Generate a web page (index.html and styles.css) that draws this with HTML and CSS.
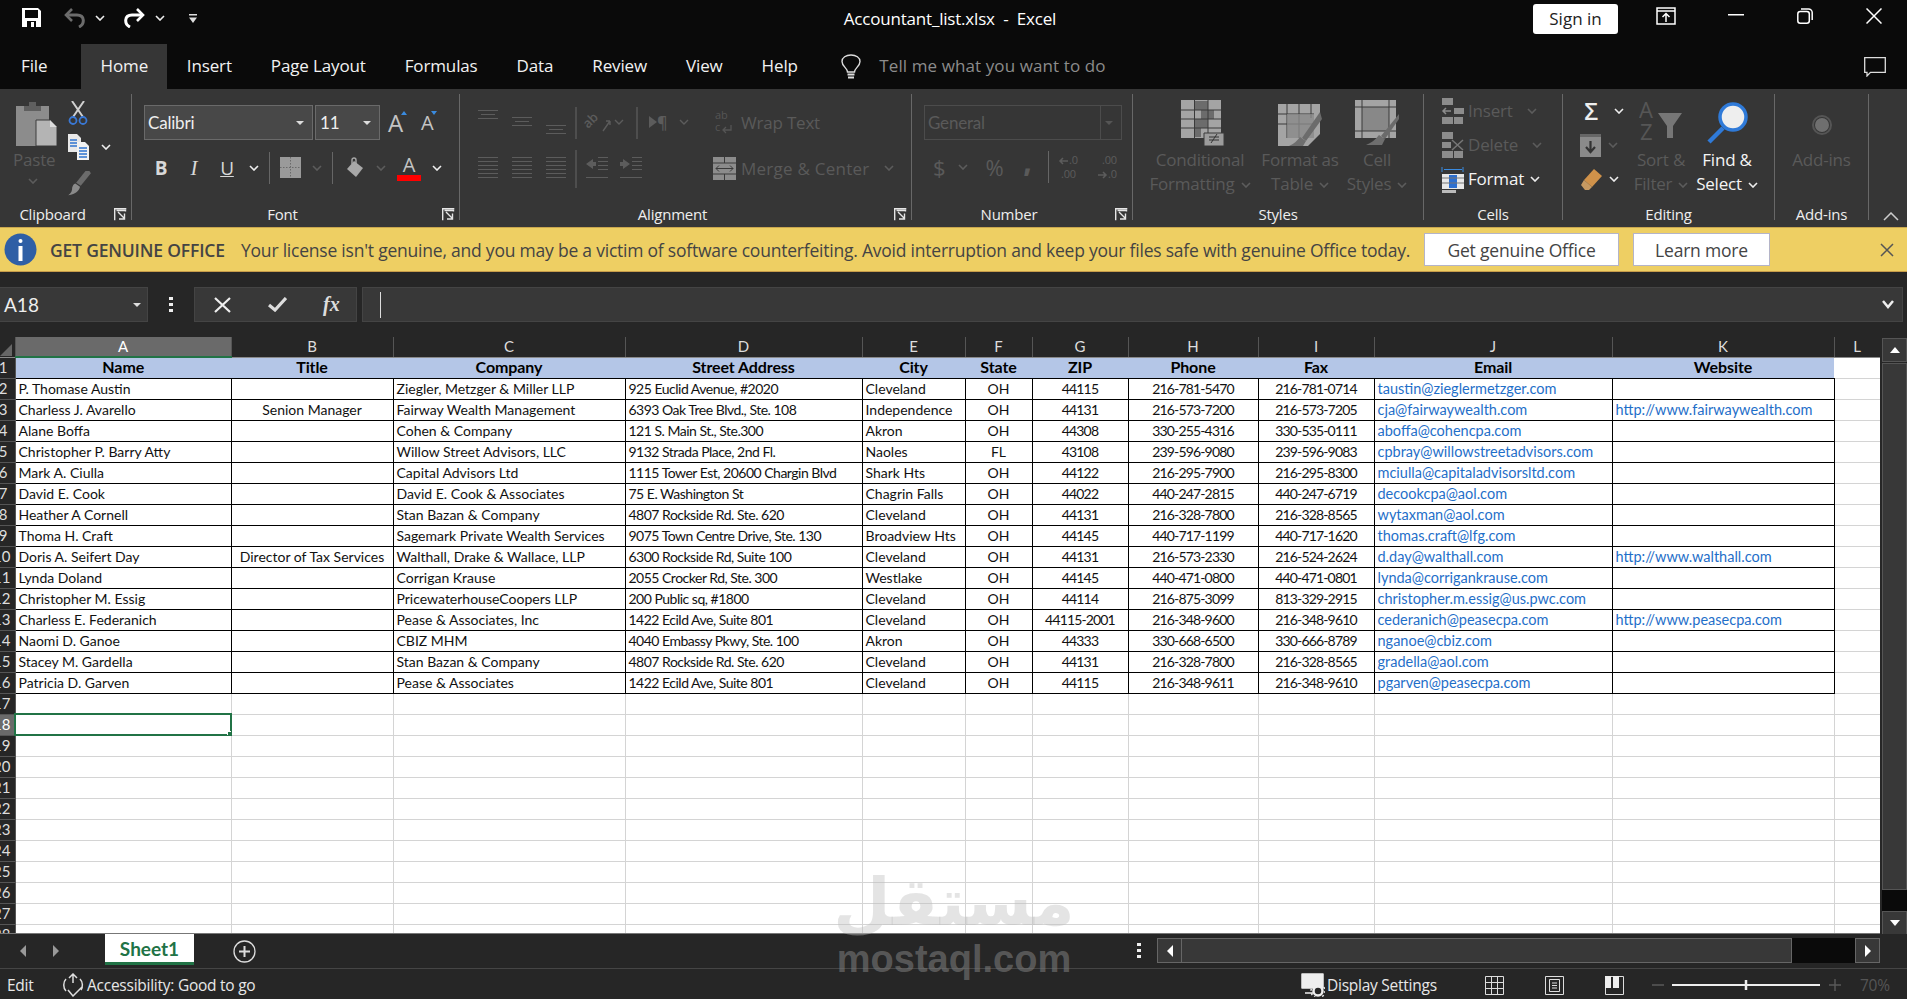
FILE: index.html
```html
<!DOCTYPE html>
<html lang="en">
<head>
<meta charset="utf-8">
<title>Accountant_list.xlsx - Excel</title>
<link rel="stylesheet" href="styles.css">
</head>
<body>
<svg class="defs" width="0" height="0" aria-hidden="true">
  <symbol id="caret" viewBox="0 0 10 6"><path d="M1 1l4 4 4-4" fill="none" stroke="currentColor" stroke-width="1.6"/></symbol>
  <symbol id="launch" viewBox="0 0 13 13"><path d="M.7 12.3V.7h11.6M2.5 2.5h9v1M4 4l6.5 6.5M10.5 5.5v5.5H5" fill="none" stroke="currentColor" stroke-width="1.4"/></symbol>
  <symbol id="brush" viewBox="0 0 30 32"><path d="M22 0h5l2 3-13 16-6-4z" fill="#6b6b6b"/><path d="M9 16l6 4c-1 5-5 9-15 11 4-3 5-6 5-10 1-3 2-4 4-5z" fill="#8a8a8a"/></symbol>
</svg>
<div class="app">
  <header class="titlebar">
    <div class="qat">
      <svg class="q-save" width="20" height="20" viewBox="0 0 20 20"><path fill="#fff" d="M0 0h16l3 3v16H0z"/><path fill="#0a0a0a" d="M3 2h13v8H3zM5 13h9v6H5z"/><path fill="#fff" d="M9 14h3v5H9z"/></svg>
      <svg class="q-undo" width="24" height="20" viewBox="0 0 24 20"><path d="M16 19c6-3 6-12-2-12H4" fill="none" stroke="#6c6c6c" stroke-width="3"/><path d="M9 1L3 7l6 6" fill="none" stroke="#6c6c6c" stroke-width="2.6"/></svg>
      <svg class="car q-c1"><use href="#caret"/></svg>
      <svg class="q-redo" width="24" height="20" viewBox="0 0 24 20"><path d="M8 19C2 16 2 7 10 7h10" fill="none" stroke="#fff" stroke-width="3"/><path d="M15 1l6 6-6 6" fill="none" stroke="#fff" stroke-width="2.6"/></svg>
      <svg class="car q-c2"><use href="#caret"/></svg>
      <svg class="q-cust" width="8" height="9" viewBox="0 0 8 9"><path d="M0 0h8v1.5H0zM0 3.5h8L4 9z" fill="#ddd"/></svg>
    </div>
    <div class="doc-title">Accountant_list.xlsx&nbsp; -&nbsp; Excel</div>
    <div class="win">
      <button class="signin">Sign in</button>
      <svg class="w-rib" width="20" height="18" viewBox="0 0 20 18"><path d="M1 1h18v16H1zM1 4h18" fill="none" stroke="#fff" stroke-width="1.5"/><path d="M10 15V7M6.5 10L10 6.5l3.500 3.500" fill="none" stroke="#fff" stroke-width="1.500"/></svg>
      <svg class="w-min" width="16" height="2" viewBox="0 0 16 2"><path d="M0 0h16v1.500H0z" fill="#fff"/></svg>
      <svg class="w-max" width="16" height="16" viewBox="0 0 16 16"><rect x=".8" y="3.500" width="11.500" height="11.700" rx="2.500" fill="none" stroke="#fff" stroke-width="1.500"/><path d="M4 1h7.500c2 0 3.700 1.500 3.700 3.500V12" fill="none" stroke="#fff" stroke-width="1.500"/></svg>
      <svg class="w-x" width="16" height="16" viewBox="0 0 16 16"><path d="M.5.5l15 15M15.500.5l-15 15" stroke="#fff" stroke-width="1.500"/></svg>
    </div>
  </header>

  <nav class="tabs">
    <span class="tab t-file">File</span>
    <span class="tab active">Home</span>
    <span class="tab">Insert</span>
    <span class="tab">Page Layout</span>
    <span class="tab">Formulas</span>
    <span class="tab">Data</span>
    <span class="tab">Review</span>
    <span class="tab">View</span>
    <span class="tab">Help</span>
    <svg class="bulb" width="20" height="25" viewBox="0 0 20 25"><path d="M6.500 18c0-4-5.500-5.500-5.500-10.500C1 3.500 5 1 10 1s9 2.500 9 6.500C19 12.500 13.500 14 13.500 18z" fill="none" stroke="#ddd" stroke-width="1.400"/><path d="M6.500 20.500h7M7 23.500h6" stroke="#ddd" stroke-width="1.800"/></svg>
    <span class="tellme">Tell me what you want to do</span>
    <svg class="comment" width="22" height="20" viewBox="0 0 22 20"><path d="M.7.7h20.600v14.600H6.500L3 19v-3.700H.7z" fill="none" stroke="#ddd" stroke-width="1.300"/></svg>
  </nav>

  <section class="ribbon">
    <div class="group g-clip">
      <div class="body">
        <div class="lg paste">
          <svg class="ico" width="41" height="46" viewBox="0 0 41 46"><path d="M0 6h33v40H0z" fill="#8c8c8c"/><path d="M8 6h17v5H8zM13 2h7v4h-7z" fill="#5f5f5f"/><path d="M20 20h14l7 7v19H20z" fill="#b4b4b4" stroke="#3c3c3c"/><path d="M34 20v7h7z" fill="#dcdcdc"/></svg>
          <span class="dim">Paste</span>
          <svg class="car dimc"><use href="#caret"/></svg>
        </div>
        <div class="mini">
          <svg class="m-cut" width="20" height="24" viewBox="0 0 20 24"><path d="M4 0l11 16M16 0L5 16" stroke="#d0d0d0" stroke-width="2"/><circle cx="5" cy="19.500" r="3.500" fill="none" stroke="#3a78d4" stroke-width="1.800"/><circle cx="15" cy="19.500" r="3.500" fill="none" stroke="#3a78d4" stroke-width="1.800"/></svg>
          <div class="m-copy"><svg width="21" height="26" viewBox="0 0 21 26"><path d="M0 0h9l4 4v14H0z" fill="#e8e8e8"/><path d="M2 6h7M2 9h9M2 12h9" stroke="#2f74d0" stroke-width="1.300"/><path d="M9 8h8l4 4v14H9z" fill="#f2f2f2"/><path d="M11 14h8M11 17h8M11 20h8M11 23h8" stroke="#2f74d0" stroke-width="1.300"/></svg><svg class="car"><use href="#caret"/></svg></div>
          <svg class="m-brush" width="24" height="25"><use href="#brush"/></svg>
        </div>
      </div>
      <div class="label"><span class="l-clip">Clipboard</span><svg class="launch"><use href="#launch"/></svg></div>
    </div>

    <div class="group g-font">
      <div class="body col">
        <div class="f-row1">
          <div class="combo c-name"><span>Calibri</span><i class="tri"></i></div>
          <div class="combo c-size"><span>11</span><i class="tri"></i></div>
          <span class="bigA grow">A<i class="up"></i></span>
          <span class="bigA shrink">A<i class="dn"></i></span>
        </div>
        <div class="f-row2">
          <span class="fx b">B</span>
          <span class="fx i">I</span>
          <span class="fx u">U</span>
          <svg class="car"><use href="#caret"/></svg>
          <i class="vsep"></i>
          <svg width="21" height="21" viewBox="0 0 21 21"><path d="M0 0h21v21H0z" fill="#9a9a9a"/><path d="M10.500 0v21M0 10.500h21" stroke="#6a6a6a" stroke-dasharray="1.500 1.500"/></svg>
          <svg class="car dimc"><use href="#caret"/></svg>
          <i class="vsep"></i>
          <svg width="20" height="21" viewBox="0 0 20 21"><path d="M9 4l9 7-7 9-9-8z" fill="#a8a8a8"/><path d="M7 7V3a2 2 0 0 1 4 0v4" fill="none" stroke="#a8a8a8" stroke-width="1.400"/></svg>
          <svg class="car dimc"><use href="#caret"/></svg>
          <span class="fcolor">A</span>
          <svg class="car"><use href="#caret"/></svg>
        </div>
      </div>
      <div class="label"><span>Font</span><svg class="launch"><use href="#launch"/></svg></div>
    </div>

    <div class="group g-align">
      <div class="body">
        <div class="a-left">
          <svg width="242" height="36" viewBox="0 0 242 36"><g stroke="#5c5c5c"><path d="M18 7.500h20M21 11.500h14M18 15.500h20M52 14.500h20M55 18.500h14M52 22.500h20M86 22.500h20M89 26.500h14M86 30.500h20"/><path d="M116 4v32M177 4v32" stroke="#666"/></g><g fill="#5c5c5c" font-family="Open Sans" font-size="13" font-weight="600"><text transform="translate(128 26) rotate(-45)">ab</text><path d="M189 13v12l8-6z"/><text x="197" y="25" font-size="16">¶</text></g><g fill="none" stroke="#5c5c5c" stroke-width="1.400"><path d="M155 17l4 4 4-4M220 17l4 4 4-4"/><path d="M143 28l7-10M150 18h-4M150 18v4"/></g></svg>
          <svg class="a-s2" width="242" height="38" viewBox="0 0 242 38"><g stroke="#5c5c5c"><path d="M18 7.500h20M18 11.500h20M18 15.500h20M18 19.500h20M18 23.500h20M18 27.500h20M52 7.500h20M52 11.500h20M52 15.500h20M52 19.500h20M52 23.500h20M52 27.500h20M86 7.500h20M86 11.500h20M86 15.500h20M86 19.500h20M86 23.500h20M86 27.500h20"/><path d="M116 0v38" stroke="#666"/><path d="M138 7.500h10M138 11.500h10M138 15.500h10M138 19.500h10M126 27.500h22M172 7.500h10M172 11.500h10M172 15.500h10M172 19.500h10M160 27.500h22"/></g><path d="M126 14l7-5v3h3v4h-3v3zM170 14l-7-5v3h-3v4h3v3z" fill="#5c5c5c"/></svg>
        </div>
        <div class="a-right">
          <div class="a-line"><svg class="a-w" width="19" height="30" viewBox="0 0 19 30"><g fill="#555" font-family="Open Sans" font-size="11"><text x="0" y="12">ab</text><text x="0" y="24">c</text></g><path d="M16 18v5H9M11 20l-3 3 3 3" fill="none" stroke="#555" stroke-width="1.300"/></svg><span class="dim">Wrap Text</span></div>
          <div class="a-line a-m"><svg class="a-mi" width="23" height="23" viewBox="0 0 23 23"><path d="M0 0h23v23H0z" fill="#8c8c8c"/><path d="M0 6h23M0 17h23M11.500 0v6M11.500 17v6" stroke="#3a3a3a"/><path d="M3 11.500h17M6 8.500l-3 3 3 3M17 8.500l3 3-3 3" fill="none" stroke="#3a3a3a"/></svg><span class="dim">Merge &amp; Center</span><svg class="car dimc"><use href="#caret"/></svg></div>
        </div>
      </div>
      <div class="label"><span>Alignment</span><svg class="launch dimc"><use href="#launch"/></svg></div>
    </div>

    <div class="group g-num">
      <div class="body col">
        <div class="combo c-gen"><span class="dim">General</span><i class="tri dimt"></i></div>
        <div class="n-row">
          <span class="dim n-d">$</span><svg class="car dimc"><use href="#caret"/></svg>
          <span class="dim n-p">%</span>
          <span class="dim n-c">,</span>
          <i class="vsep"></i>
          <svg width="60" height="28" viewBox="0 0 60 28"><g fill="#5c5c5c" font-family="Open Sans" font-size="11"><text x="11" y="11">.0</text><text x="3" y="25">.00</text><text x="44" y="11">.00</text><text x="50" y="25">.0</text></g><path d="M10 8H2M5 5L2 8l3 3M40 22h8M45 19l3 3-3 3" fill="none" stroke="#5c5c5c" stroke-width="1.500"/></svg>
        </div>
      </div>
      <div class="label"><span>Number</span><svg class="launch dimc"><use href="#launch"/></svg></div>
    </div>

    <div class="group g-styles">
      <div class="body">
        <div class="lg s1">
          <svg class="ico" width="44" height="46" viewBox="0 0 44 46"><path d="M0 0h40v38H0z" fill="#a4a4a4"/><path d="M14 1h13v9H14zM14 19h13v9H14zM20 10h13v9H20zM14 28h6v9h-6z" fill="#6c6c6c"/><path d="M0 10h40M0 19h40M0 28h40M13.500 0v38M27 0v38" stroke="#3a3a3a"/><path d="M23 33h20v13H23z" fill="#9c9c9c" stroke="#3a3a3a"/><path d="M28 40h10M28 43h10M30 46l6-9" stroke="#333" transform="translate(0 -3)"/></svg>
          <span class="dim">Conditional</span>
          <span class="dim">Formatting<svg class="car dimc"><use href="#caret"/></svg></span>
        </div>
        <div class="lg s2">
          <svg class="ico" width="44" height="46" viewBox="0 0 44 46"><path d="M0 4h42v30L30 46H0z" fill="#a4a4a4"/><path d="M0 14h36M0 24h36M9 4v34M21 4v34M33 4v14" stroke="#3a3a3a"/><path d="M9 14h27v24H9z" fill="#8a8a8a" opacity=".8"/><path d="M42 12L24 38l4 3 16-22z" fill="#6b6b6b"/><path d="M22 37l6 4-3 5H11c5-2 8-5 11-9z" fill="#6e6e6e"/></svg>
          <span class="dim">Format as</span>
          <span class="dim">Table<svg class="car dimc"><use href="#caret"/></svg></span>
        </div>
        <div class="lg s3">
          <svg class="ico" width="44" height="46" viewBox="0 0 44 46"><path d="M0 0h41v38H0z" fill="#a4a4a4"/><path d="M7 7h27v24H7z" fill="#888"/><path d="M0 7h41M0 31h41M7 0v38M34 0v38" stroke="#3a3a3a"/><path d="M44 14L26 36l4 3 14-20z" fill="#6b6b6b"/><path d="M24 35l6 4-3 6H11c5-2 9-5 13-10z" fill="#6e6e6e"/></svg>
          <span class="dim">Cell</span>
          <span class="dim">Styles<svg class="car dimc"><use href="#caret"/></svg></span>
        </div>
      </div>
      <div class="label"><span>Styles</span></div>
    </div>

    <div class="group g-cells">
      <div class="body col">
        <div class="c-row"><svg width="23" height="26" viewBox="0 0 23 26"><path d="M1 0h11v7H1zM1 19h11v7H1zM13 19h9v7h-9zM13 10h10v6H13zM1 0h11v7H1z" fill="#8c8c8c"/><path d="M2 13h8M5 10l-3 3 3 3" stroke="#8c8c8c" fill="none" stroke-width="1.500"/></svg><span class="dim">Insert</span><svg class="car dimc c-i"><use href="#caret"/></svg></div>
        <div class="c-row"><svg width="23" height="26" viewBox="0 0 23 26"><path d="M1 0h11v7H1zM1 19h11v7H1zM13 19h9v7h-9zM1 10h9v6H1z" fill="#8c8c8c"/><path d="M11 8l11 10M22 8L11 18" stroke="#777" stroke-width="1.500"/></svg><span class="dim">Delete</span><svg class="car dimc c-d"><use href="#caret"/></svg></div>
        <div class="c-row"><svg width="23" height="27" viewBox="0 0 23 27"><path d="M1 1v5M22 1v5M3 3.500h18" stroke="#3a8be0" fill="none"/><path d="M1 8h22v15H1z" fill="#e8e8e8"/><path d="M8 9h8v13H8z" fill="#2d6fd0"/><path d="M1 24h14v3H1z" fill="#bbb"/><path d="M1 12h22M1 17h22" stroke="#777"/></svg><span class="wht">Format</span><svg class="car c-f"><use href="#caret"/></svg></div>
      </div>
      <div class="label"><span>Cells</span></div>
    </div>

    <div class="group g-edit">
      <div class="body">
        <div class="mini2">
          <div class="e-row"><span class="sigma">Σ</span><svg class="car e-c1"><use href="#caret"/></svg></div>
          <div class="e-row"><svg width="21" height="23" viewBox="0 0 21 23"><path d="M0 0h21v23H0z" fill="#8a8a8a"/><path d="M0 0h21v3H0z" fill="#666"/><path d="M10.500 7v11M6 13l4.500 5 4.500-5" fill="none" stroke="#333" stroke-width="2.200"/></svg><svg class="car dimc e-c2"><use href="#caret"/></svg></div>
          <div class="e-row"><svg width="22" height="21" viewBox="0 0 22 21"><path d="M14 0l8 7-10 11-8-7z" fill="#d0924a"/><path d="M4 11l8 7-3 3H5L1 16z" fill="#c79a62"/></svg><svg class="car e-c3"><use href="#caret"/></svg></div>
        </div>
        <div class="lg sort">
          <svg class="ico" width="44" height="46" viewBox="0 0 44 46"><g fill="#565656" font-family="Open Sans" font-size="22"><text x="0" y="18">A</text><text x="1" y="40">Z</text></g><path d="M19 13h24L34 26v12h-6V26z" fill="#767676"/></svg>
          <span class="dim">Sort &amp;</span>
          <span class="dim">Filter<svg class="car dimc"><use href="#caret"/></svg></span>
        </div>
        <div class="lg find">
          <svg class="ico" width="42" height="46" viewBox="0 0 42 46"><circle cx="27" cy="17" r="13" fill="#eee" stroke="#2f7ad8" stroke-width="3.500"/><path d="M17 28L3 42" stroke="#2f7ad8" stroke-width="4.500"/></svg>
          <span class="wht">Find &amp;</span>
          <span class="wht">Select<svg class="car"><use href="#caret"/></svg></span>
        </div>
      </div>
      <div class="label"><span>Editing</span></div>
    </div>

    <div class="group g-add">
      <div class="body">
        <div class="lg add">
          <svg class="ico" width="46" height="46" viewBox="0 0 46 46"><circle cx="23" cy="25" r="7" fill="#6f6f6f"/><circle cx="23" cy="25" r="9" fill="none" stroke="#555" stroke-width="2"/></svg>
          <span class="dim">Add-ins</span>
        </div>
      </div>
      <div class="label"><span>Add-ins</span></div>
    </div>
    <svg class="collapse" width="16" height="9" viewBox="0 0 16 9"><path d="M1 8l7-7 7 7" fill="none" stroke="#ccc" stroke-width="1.500"/></svg>
  </section>

  <section class="notice">
    <svg class="n-info" width="33" height="33" viewBox="0 0 33 33"><circle cx="16.500" cy="16.500" r="16" fill="#2f5fa5"/><rect x="14.500" y="13" width="4" height="15" fill="#fff"/><rect x="14.500" y="6" width="4" height="4" rx="2" fill="#fff"/></svg>
    <strong class="n-title">GET GENUINE OFFICE</strong>
    <span class="n-msg">Your license isn't genuine, and you may be a victim of software counterfeiting. Avoid interruption and keep your files safe with genuine Office today.</span>
    <button class="n-btn n-get">Get genuine Office</button>
    <button class="n-btn n-learn">Learn more</button>
    <svg class="n-x" width="14" height="14" viewBox="0 0 14 14"><path d="M1 1l12 12M13 1L1 13" stroke="#555" stroke-width="1.500"/></svg>
  </section>

  <section class="fbar">
    <div class="namebox"><span>A18</span><i class="tri"></i></div>
    <svg class="f-dots" width="4" height="15" viewBox="0 0 4 15"><path d="M0 0h4v3H0zM0 6h4v3H0zM0 12h4v3H0z" fill="#eee"/></svg>
    <div class="fbtns">
      <svg width="17" height="16" viewBox="0 0 17 16"><path d="M1 1l15 14M16 1L1 15" stroke="#eee" stroke-width="2.200"/></svg>
      <svg width="19" height="15" viewBox="0 0 19 15"><path d="M1 8l6 5L18 1" fill="none" stroke="#ddd" stroke-width="3.200"/></svg>
      <span class="fxlbl">fx</span>
    </div>
    <div class="finput"><i class="cursor"></i><svg class="f-exp" width="12" height="9" viewBox="0 0 12 9"><path d="M1 1l5 6 5-6" fill="none" stroke="#eee" stroke-width="2.500"/></svg></div>
  </section>

  <section class="sheetwrap">
    <div class="sheet">
      <table>
        <colgroup><col class="w-rh"><col class="w-a"><col class="w-b"><col class="w-c"><col class="w-d"><col class="w-e"><col class="w-f"><col class="w-g"><col class="w-h"><col class="w-i"><col class="w-j"><col class="w-k"><col class="w-l"></colgroup>
        <thead>
          <tr class="ch"><th class="corner"><i></i></th><th class="on">A</th><th>B</th><th>C</th><th>D</th><th>E</th><th>F</th><th>G</th><th>H</th><th>I</th><th>J</th><th>K</th><th>L</th></tr>
        </thead>
        <tbody>
          <tr class="hd"><th>1</th><td>Name</td><td>Title</td><td>Company</td><td>Street Address</td><td>City</td><td>State</td><td>ZIP</td><td>Phone</td><td>Fax</td><td>Email</td><td>Website</td><td class="e"></td></tr>
          <tr class="dt"><th>2</th><td>P. Thomase Austin</td><td></td><td>Ziegler, Metzger &amp; Miller LLP</td><td>925 Euclid Avenue, #2020</td><td>Cleveland</td><td class="c">OH</td><td class="c">44115</td><td class="c">216-781-5470</td><td class="c">216-781-0714</td><td class="k">taustin@zieglermetzger.com</td><td></td><td class="e"></td></tr>
          <tr class="dt"><th>3</th><td>Charless J. Avarello</td><td class="c">Senion Manager</td><td>Fairway Wealth Management</td><td>6393 Oak Tree Blvd., Ste. 108</td><td>Independence</td><td class="c">OH</td><td class="c">44131</td><td class="c">216-573-7200</td><td class="c">216-573-7205</td><td class="k">cja@fairwaywealth.com</td><td class="k">http://www.fairwaywealth.com</td><td class="e"></td></tr>
          <tr class="dt"><th>4</th><td>Alane Boffa</td><td></td><td>Cohen &amp; Company</td><td>121 S. Main St., Ste.300</td><td>Akron</td><td class="c">OH</td><td class="c">44308</td><td class="c">330-255-4316</td><td class="c">330-535-0111</td><td class="k">aboffa@cohencpa.com</td><td></td><td class="e"></td></tr>
          <tr class="dt"><th>5</th><td>Christopher P. Barry Atty</td><td></td><td>Willow Street Advisors, LLC</td><td>9132 Strada Place, 2nd Fl.</td><td>Naoles</td><td class="c">FL</td><td class="c">43108</td><td class="c">239-596-9080</td><td class="c">239-596-9083</td><td class="k">cpbray@willowstreetadvisors.com</td><td></td><td class="e"></td></tr>
          <tr class="dt"><th>6</th><td>Mark A. Ciulla</td><td></td><td>Capital Advisors Ltd</td><td>1115 Tower Est, 20600 Chargin Blvd</td><td>Shark Hts</td><td class="c">OH</td><td class="c">44122</td><td class="c">216-295-7900</td><td class="c">216-295-8300</td><td class="k">mciulla@capitaladvisorsltd.com</td><td></td><td class="e"></td></tr>
          <tr class="dt"><th>7</th><td>David E. Cook</td><td></td><td>David E. Cook &amp; Associates</td><td>75 E. Washington St</td><td>Chagrin Falls</td><td class="c">OH</td><td class="c">44022</td><td class="c">440-247-2815</td><td class="c">440-247-6719</td><td class="k">decookcpa@aol.com</td><td></td><td class="e"></td></tr>
          <tr class="dt"><th>8</th><td>Heather A Cornell</td><td></td><td>Stan Bazan &amp; Company</td><td>4807 Rockside Rd. Ste. 620</td><td>Cleveland</td><td class="c">OH</td><td class="c">44131</td><td class="c">216-328-7800</td><td class="c">216-328-8565</td><td class="k">wytaxman@aol.com</td><td></td><td class="e"></td></tr>
          <tr class="dt"><th>9</th><td>Thoma H. Craft</td><td></td><td>Sagemark Private Wealth Services</td><td>9075 Town Centre Drive, Ste. 130</td><td>Broadview Hts</td><td class="c">OH</td><td class="c">44145</td><td class="c">440-717-1199</td><td class="c">440-717-1620</td><td class="k">thomas.craft@lfg.com</td><td></td><td class="e"></td></tr>
          <tr class="dt"><th>10</th><td>Doris A. Seifert Day</td><td class="c">Director of Tax Services</td><td>Walthall, Drake &amp; Wallace, LLP</td><td>6300 Rockside Rd, Suite 100</td><td>Cleveland</td><td class="c">OH</td><td class="c">44131</td><td class="c">216-573-2330</td><td class="c">216-524-2624</td><td class="k">d.day@walthall.com</td><td class="k">http://www.walthall.com</td><td class="e"></td></tr>
          <tr class="dt"><th>11</th><td>Lynda Doland</td><td></td><td>Corrigan Krause</td><td>2055 Crocker Rd, Ste. 300</td><td>Westlake</td><td class="c">OH</td><td class="c">44145</td><td class="c">440-471-0800</td><td class="c">440-471-0801</td><td class="k">lynda@corrigankrause.com</td><td></td><td class="e"></td></tr>
          <tr class="dt"><th>12</th><td>Christopher M. Essig</td><td></td><td>PricewaterhouseCoopers LLP</td><td>200 Public sq, #1800</td><td>Cleveland</td><td class="c">OH</td><td class="c">44114</td><td class="c">216-875-3099</td><td class="c">813-329-2915</td><td class="k">christopher.m.essig@us.pwc.com</td><td></td><td class="e"></td></tr>
          <tr class="dt"><th>13</th><td>Charless E. Federanich</td><td></td><td>Pease &amp; Associates, Inc</td><td>1422 Ecild Ave, Suite 801</td><td>Cleveland</td><td class="c">OH</td><td class="c">44115-2001</td><td class="c">216-348-9600</td><td class="c">216-348-9610</td><td class="k">cederanich@peasecpa.com</td><td class="k">http://www.peasecpa.com</td><td class="e"></td></tr>
          <tr class="dt"><th>14</th><td>Naomi D. Ganoe</td><td></td><td>CBIZ MHM</td><td>4040 Embassy Pkwy, Ste. 100</td><td>Akron</td><td class="c">OH</td><td class="c">44333</td><td class="c">330-668-6500</td><td class="c">330-666-8789</td><td class="k">nganoe@cbiz.com</td><td></td><td class="e"></td></tr>
          <tr class="dt"><th>15</th><td>Stacey M. Gardella</td><td></td><td>Stan Bazan &amp; Company</td><td>4807 Rockside Rd. Ste. 620</td><td>Cleveland</td><td class="c">OH</td><td class="c">44131</td><td class="c">216-328-7800</td><td class="c">216-328-8565</td><td class="k">gradella@aol.com</td><td></td><td class="e"></td></tr>
          <tr class="dt"><th>16</th><td>Patricia D. Garven</td><td></td><td>Pease &amp; Associates</td><td>1422 Ecild Ave, Suite 801</td><td>Cleveland</td><td class="c">OH</td><td class="c">44115</td><td class="c">216-348-9611</td><td class="c">216-348-9610</td><td class="k">pgarven@peasecpa.com</td><td></td><td class="e"></td></tr>
          <tr class="em"><th>17</th><td></td><td></td><td></td><td></td><td></td><td></td><td></td><td></td><td></td><td></td><td></td><td></td></tr>
          <tr class="em"><th class="on">18</th><td class="sel"></td><td></td><td></td><td></td><td></td><td></td><td></td><td></td><td></td><td></td><td></td><td></td></tr>
          <tr class="em"><th>19</th><td></td><td></td><td></td><td></td><td></td><td></td><td></td><td></td><td></td><td></td><td></td><td></td></tr>
          <tr class="em"><th>20</th><td></td><td></td><td></td><td></td><td></td><td></td><td></td><td></td><td></td><td></td><td></td><td></td></tr>
          <tr class="em"><th>21</th><td></td><td></td><td></td><td></td><td></td><td></td><td></td><td></td><td></td><td></td><td></td><td></td></tr>
          <tr class="em"><th>22</th><td></td><td></td><td></td><td></td><td></td><td></td><td></td><td></td><td></td><td></td><td></td><td></td></tr>
          <tr class="em"><th>23</th><td></td><td></td><td></td><td></td><td></td><td></td><td></td><td></td><td></td><td></td><td></td><td></td></tr>
          <tr class="em"><th>24</th><td></td><td></td><td></td><td></td><td></td><td></td><td></td><td></td><td></td><td></td><td></td><td></td></tr>
          <tr class="em"><th>25</th><td></td><td></td><td></td><td></td><td></td><td></td><td></td><td></td><td></td><td></td><td></td><td></td></tr>
          <tr class="em"><th>26</th><td></td><td></td><td></td><td></td><td></td><td></td><td></td><td></td><td></td><td></td><td></td><td></td></tr>
          <tr class="em"><th>27</th><td></td><td></td><td></td><td></td><td></td><td></td><td></td><td></td><td></td><td></td><td></td><td></td></tr>
          <tr class="em"><th>28</th><td></td><td></td><td></td><td></td><td></td><td></td><td></td><td></td><td></td><td></td><td></td><td></td></tr>
        </tbody>
      </table>
    </div>
    <div class="vscroll">
      <div class="sb-btn"><i class="t-up"></i></div>
      <div class="sb-thumb"></div>
      <div class="sb-rest"></div>
      <div class="sb-btn"><i class="t-dn"></i></div>
    </div>
  </section>

  <section class="tabbar">
    <i class="nav-l"></i>
    <i class="nav-r"></i>
    <span class="sheet-tab">Sheet1</span>
    <svg class="add-sheet" width="23" height="23" viewBox="0 0 23 23"><circle cx="11.500" cy="11.500" r="10.500" fill="none" stroke="#ddd" stroke-width="1.300"/><path d="M11.500 6v11M6 11.500h11" stroke="#ddd" stroke-width="2"/></svg>
    <svg class="h-dots" width="4" height="15" viewBox="0 0 4 15"><path d="M0 0h4v3H0zM0 6h4v3H0zM0 12h4v3H0z" fill="#eee"/></svg>
    <div class="hscroll">
      <div class="hb"><i class="t-l"></i></div>
      <div class="h-thumb"></div>
      <div class="h-rest"></div>
      <div class="hb"><i class="t-r"></i></div>
    </div>
  </section>

  <footer class="status">
    <span class="st-edit">Edit</span>
    <svg class="st-acc" width="22" height="24" viewBox="0 0 22 24"><path d="M4 6C1 9 1 15 4 18M18 6c3 3 3 8 1 11" fill="none" stroke="#ddd" stroke-width="1.500"/><path d="M11 1v9M7 5l4-4 4 4M6 17l5 6 9-9" fill="none" stroke="#ddd" stroke-width="1.500"/></svg>
    <span class="st-text">Accessibility: Good to go</span>
    <svg class="st-disp" width="24" height="24" viewBox="0 0 24 24"><path d="M1 1h21v14H1z" fill="#eee" stroke="#eee" stroke-linejoin="round" stroke-width="1.500"/><path d="M4 20h8" stroke="#eee" stroke-width="1.500"/><circle cx="17" cy="18" r="4.500" fill="#262626" stroke="#eee" stroke-width="2.500"/><circle cx="17" cy="18" r="7" fill="none" stroke="#eee" stroke-width="1.500" stroke-dasharray="2 2.400"/></svg>
    <span class="st-text">Display Settings</span>
    <svg class="st-v1" width="19" height="19" viewBox="0 0 19 19"><path d="M.5.500h18v18H.500zM6.500.500v18M12.500.500v18M.500 6.500h18M.500 12.500h18" fill="none" stroke="#ddd"/></svg>
    <svg class="st-v2" width="19" height="19" viewBox="0 0 19 19"><path d="M.5.500h18v18H.500zM4.500 3.500h10v12h-10zM7 7h5M7 9.500h5M7 12h5" fill="none" stroke="#ddd"/></svg>
    <svg class="st-v3" width="19" height="19" viewBox="0 0 19 19"><path d="M.5.500h18v18H.500z" fill="none" stroke="#ddd"/><path d="M0 0h6v12H0zM8 0h6v12H8z" fill="#eee"/></svg>
    <svg class="st-zoom" width="190" height="14" viewBox="0 0 190 14"><path d="M0 7h12M177 7h12M183 1v12" stroke="#5a5a5a" stroke-width="1.400"/><path d="M20 7h148" stroke="#eee" stroke-width="2"/><path d="M94 2v10" stroke="#eee" stroke-width="2.500"/></svg>
    <span class="st-pct">70%</span>
  </footer>

  <div class="mark"><span class="m-ar">مستقل</span><span class="m-en">mostaql.com</span></div>
</div>
</body>
</html>
```

FILE: styles.css
```css
*{box-sizing:border-box}
html,body{margin:0;padding:0;background:#262626;overflow:hidden}
.defs{position:absolute}
.app{position:relative;width:1907px;height:999px;display:flex;flex-direction:column;font-family:"Open Sans","Noto Sans",sans-serif;color:#fff;overflow:hidden}
svg{display:block;flex:none}
.car{width:10px;height:6px;color:#eee}
.dimc{color:#5c5c5c}
.dim{color:#5a5a5a}
.wht{color:#f4f4f4}

/* title */
.titlebar{height:44px;background:#0a0a0a;display:flex;align-items:flex-start}
.qat{display:flex;align-items:center;height:36px;padding-left:22px;width:0;flex:1}
.q-undo{margin-left:21px}.q-c1{margin-left:8px}.q-redo{margin-left:17px}.q-c2{margin-left:9px}.q-cust{margin-left:24px}
.doc-title{width:216px;text-align:center;font-size:17px;line-height:38px;white-space:nowrap;letter-spacing:-.2px;flex:none;margin-right:475px;display:flex;justify-content:center}
.win{display:flex;align-items:center;height:36px;padding-right:25px;flex:none;width:374px}
.signin{width:86px;height:30px;margin-top:1px;border:0;border-radius:3px;background:#fff;color:#222;font:17px "Open Sans",sans-serif;padding:0}
.w-rib{margin-left:38px;margin-top:-5px}.w-min{margin-left:52px;margin-top:-6px}.w-max{margin-left:53px;margin-top:-5px}.w-x{margin-left:53px;margin-top:-4px}

/* tabs */
.tabs{height:45px;background:#0a0a0a;display:flex;align-items:stretch;font-size:17px}
.tab{display:flex;align-items:center;padding:0 19.500px 2px;letter-spacing:-.14px;color:#f2f2f2}
.t-file{padding:0 21px 2px;margin-right:13px}
.active{background:#363636;padding:0 18px 2px;width:86px;justify-content:center}
.bulb{margin:10px 0 0 24px}
.tellme{color:#8c8c8c;margin-left:18px;padding-bottom:2px;display:flex;align-items:center;letter-spacing:.1px;flex:1}
.comment{margin:13px 21px 0 0}

/* ribbon */
.ribbon{height:138px;background:#363636;display:flex;padding-top:5px;flex:none;font-size:17px;letter-spacing:-.2px}
.group{height:126px;display:flex;flex-direction:column;border-right:1px solid #686868;flex:none}
.body{height:106px;display:flex;flex:none}
.col{flex-direction:column}
.label{height:20px;margin-top:4px;margin-bottom:-4px;display:flex;align-items:center;color:#eee;font-size:15px;line-height:20px}
.label span{flex:1;text-align:center}
.label span:not(:last-child){padding-right:9px}
.label .launch{margin-right:4px}
.launch{width:13px;height:13px;color:#e6e6e6}
.g-clip{width:132px}.g-font{width:328px}.g-align{width:452px}.g-num{width:221px}.g-styles{width:291px}.g-cells{width:139px}.g-edit{width:212px}.g-add{width:94px}
.label .l-clip{padding-right:28px}
.lg{display:flex;flex-direction:column;align-items:center;line-height:24px;padding-top:6px;white-space:nowrap}
.lg .ico{margin-bottom:2px}
.lg .car{display:inline-block;margin-left:6px;vertical-align:2px}
.paste{width:44px;margin-left:13px;align-items:flex-start}
.paste .ico{margin-left:3px}
.paste span{width:40px;text-align:center}
.paste .car{margin:6px 0 0 15px}
.mini{display:flex;flex-direction:column;margin-left:11px;padding-top:7px;width:40px}
.m-copy{display:flex;margin-top:9px;align-items:center}
.m-copy .car{margin-left:12px}
.m-brush{margin-top:11px}

/* font */
.f-row1{display:flex;align-items:center;padding:11px 0 0 12px}
.combo{height:35px;background:#484848;border:1px solid #6a6a6a;display:flex;align-items:center;justify-content:space-between;padding:0 8px 0 3px;font:17px Lato,sans-serif;color:#eee}
.c-name{width:169px}.c-size{width:65px;margin-left:2px;padding-left:4px}
.tri{width:0;height:0;border-left:4px solid transparent;border-right:4px solid transparent;border-top:4px solid #ddd;display:block}
.dimt{border-top-color:#555}
.bigA{position:relative;font-size:22px;line-height:35px;color:#c4c4c4;font-weight:400}
.grow{margin-left:8px;font-size:24px}.shrink{margin-left:18px;font-size:20px}
.up,.dn{position:absolute;right:-4px;top:6px;width:0;height:0;border-left:3.500px solid transparent;border-right:3.500px solid transparent}
.up{border-bottom:4px solid #3a8be0}.dn{border-top:4px solid #3a8be0}
.f-row2{display:flex;align-items:center;height:35px;margin-top:10px;padding-left:21px}
.fx{width:16px;text-align:center;color:#d8d8d8;font-size:19px;line-height:24px}
.b{font-weight:700}
.i{font-family:"Liberation Serif",serif;font-style:italic;margin-left:17px;font-size:21px}
.u{text-decoration:underline;margin-left:17px}
.f-row2 .car{margin-left:14px}
.vsep{width:1px;height:32px;background:#666;margin:0 10px 0 10px;display:block;flex:none}
.f-row2 .vsep ~ .vsep{margin-right:12px}
.f-row2 .dimc{margin-left:11px}
.fcolor{margin-left:11px;width:24px;height:27px;border-bottom:6px solid #f00;text-align:center;color:#c4c4c4;font-size:20px;line-height:22px}
.f-row2 .fcolor + .car{margin-left:11px}

/* align */
.a-left{width:242px;padding-top:9px}
.a-s2{margin-top:11px}
.a-right{padding-top:10px;font-size:17px}
.a-line{display:flex;align-items:center;height:36px;padding-left:13px}
.a-w{margin-right:7px}
.a-m{margin-top:10px;padding-left:11px}
.a-mi{margin-right:5px}
.a-m .dim{letter-spacing:.25px}
.a-m .car{margin-left:14px}

/* number */
.c-gen{width:198px;margin:11px 0 0 12px;border-color:#4c4c4c;background:linear-gradient(to left,transparent 20px,#4c4c4c 20px,#4c4c4c 21px,transparent 21px);padding-left:3px}
.n-row{display:flex;align-items:center;height:36px;margin-top:9px;padding-left:21px}
.n-d{font-size:22px}
.n-row .car{margin-left:13px}
.n-p{font-size:22px;margin-left:17px}
.n-c{font-size:26px;font-weight:800;margin:-10px 0 0 20px}
.n-row .vsep{margin:0 9px 0 17px}

/* styles */
.s1{width:100px;margin-left:17px}.s1 .ico{margin-left:6px}.s2{width:100px}.s3{width:54px}

/* cells */
.c-row{display:flex;align-items:center;height:34px;padding-left:17px;font-size:17px}
.c-row span{margin-top:-2px}
.c-row svg:first-child{margin-right:4px}
.c-i{margin-left:14px}.c-d{margin-left:14px}.c-f{margin-left:6px}

/* edit */
.mini2{width:76px;padding-left:17px}
.e-row{display:flex;align-items:center;height:34px}
.sigma{width:22px;color:#eee;font-size:24px;line-height:24px;font-weight:600;text-align:center}
.e-c1{margin-left:12px}.e-c2{margin-left:7px}.e-c3{margin-left:7px}
.sort{width:44px}
.find{width:44px;margin-left:22px}
.add{width:94px}
.collapse{align-self:flex-end;margin:0 0 6px 14px}

/* notice */
.notice{height:45px;background:#eecf63;border-top:1px solid #c9a74f;border-bottom:1px solid #c79c4a;display:flex;align-items:center;color:#444;font-size:17.500px;flex:none}
.n-info{margin-left:4px}
.n-title{margin-left:13px;font-weight:600;width:176px;white-space:nowrap;letter-spacing:-.18px}
.n-msg{margin-left:15px;width:1168px;white-space:nowrap;letter-spacing:-.22px;flex:none}
.n-btn{height:33px;background:#fff;border:1px solid #b4b4c8;font:17.500px "Open Sans",sans-serif;color:#444;padding:0;letter-spacing:-.2px}
.n-get{width:195px;margin-left:15px}.n-learn{width:137px;margin-left:14px}
.n-x{margin-left:110px}

/* formula */
.fbar{height:65px;background:#262626;padding-top:15px;display:flex;flex:none}
.namebox{width:148px;height:35px;background:#383838;border:1px solid #444;border-left:0;display:flex;align-items:center;justify-content:space-between;padding:0 6px 0 4px;font:19px Lato,sans-serif;color:#eee}
.f-dots{margin:10px 0 0 21px}
.fbtns{width:163px;height:35px;margin-left:21px;background:#383838;border:1px solid #444;display:flex;align-items:center;padding-left:19px}
.fbtns svg:nth-child(2){margin-left:37px}
.fxlbl{margin-left:36px;font:italic 700 20px "Liberation Serif",serif;color:#ddd}
.finput{width:1541px;height:35px;margin-left:5px;background:#383838;border:1px solid #444;display:flex;align-items:center;padding-left:17px;justify-content:space-between;padding-right:8px}
.cursor{width:1px;height:26px;background:#ddd;display:block}

/* sheet */
.sheetwrap{height:597px;display:flex;flex:none;background:#262626}
.sheet{width:1880px;height:597px;overflow:hidden;background:#fff;border-bottom:1px solid #777}
table{border-collapse:collapse;table-layout:fixed;width:1880px;font:14px/19px Lato,sans-serif;color:#111}
.w-rh{width:15px}.w-a{width:216px}.w-b{width:162px}.w-c{width:232px}.w-d{width:237px}.w-e{width:103px}.w-f{width:67px}.w-g{width:96px}.w-h{width:130px}.w-i{width:116px}.w-j{width:238px}.w-k{width:222px}.w-l{width:46px}
tr{height:21px}
.ch{height:20px}
.ch th{background:#262626;color:#ddd;font-weight:400;font-size:15px;padding:0;border-right:1px solid #555;border-bottom:1px solid #8a8a8a;border-top:0}
.ch th.on{background:#6a6a6a;border-bottom:2px solid #217346;color:#fff}
.corner i{display:block;width:0;height:0;border-left:12px solid transparent;border-bottom:12px solid #666;margin-top:6px}
tbody th{background:#262626;color:#ddd;font-weight:400;font-size:15px;padding:0 7px 0 0;overflow:hidden;direction:rtl;text-align:right;white-space:nowrap;border-bottom:1px solid #555;border-right:1px solid #555}
tbody tr:nth-child(n+10) th{padding-right:4px}
tbody th.on{background:#6a6a6a;color:#fff}
td{padding:0 3px;white-space:nowrap;overflow:hidden;border:1px solid #d4d4d4;height:21px}
.hd td{background:#b4c6e7;text-align:center;font-weight:700;border:0;border-bottom:1px solid #000;color:#000;font-size:16px;line-height:17px;letter-spacing:-.1px;vertical-align:top}
.hd td.e{background:#fff;border-bottom:1px solid #d4d4d4;border-left:hidden}
.dt td{border:1px solid #000}
.dt td.e{border:1px solid #d4d4d4;border-left:1px solid #000}
.dt td:nth-child(5){letter-spacing:-.5px}
.dt td:nth-child(8),.dt td:nth-child(9),.dt td:nth-child(10){letter-spacing:-.85px}
.c{text-align:center}
td.k{color:#1f6fc9;font-size:14.500px}
.sel{position:relative;outline:2px solid #217346;outline-offset:-1px}
.sel::after{content:"";position:absolute;right:-3px;bottom:-3px;width:5px;height:5px;background:#217346;border:1px solid #fff}
.vscroll{width:25px;margin-left:2px;display:flex;flex-direction:column;padding-top:1px}
.sb-btn{height:24px;background:#383838;border:1px solid #555;display:flex;align-items:center;justify-content:center;flex:none}
.sb-thumb{height:527px;background:#383838;border:1px solid #555;margin-top:1px;flex:none}
.sb-rest{height:21px;background:#0a0a0a;flex:none}
.t-up,.t-dn{width:0;height:0;border-left:5px solid transparent;border-right:5px solid transparent;display:block}
.t-up{border-bottom:6px solid #fff}.t-dn{border-top:6px solid #fff}

/* tab bar */
.tabbar{height:35px;background:#262626;border-bottom:1px solid #454545;display:flex;align-items:flex-start;flex:none}
.nav-l,.nav-r{width:0;height:0;border-top:6px solid transparent;border-bottom:6px solid transparent;display:block;margin-top:11px}
.nav-l{border-right:6px solid #999;margin-left:20px}
.nav-r{border-left:6px solid #999;margin-left:27px}
.sheet-tab{width:89px;height:31px;margin-left:46px;background:#fff;border-bottom:3px solid #217346;color:#217346;font:700 19px/30px Lato,sans-serif;text-align:center}
.add-sheet{margin:6px 0 0 39px}
.h-dots{margin:9px 0 0 881px}
.hscroll{width:723px;height:25px;margin:4px 0 0 16px;display:flex}
.hb{width:25px;height:25px;background:#383838;border:1px solid #666;display:flex;align-items:center;justify-content:center;flex:none}
.t-l,.t-r{width:0;height:0;border-top:6px solid transparent;border-bottom:6px solid transparent;display:block}
.t-l{border-right:6px solid #fff}.t-r{border-left:6px solid #fff}
.h-thumb{width:610px;background:#383838;border:1px solid #666;border-left:0;flex:none}
.h-rest{width:63px;background:#0a0a0a;flex:none}

/* status */
.status{height:30px;background:#262626;display:flex;align-items:center;font-size:15.500px;letter-spacing:-.25px;color:#e8e8e8;flex:none;padding-top:2px}
.st-edit{margin-left:7px;width:30px}
.st-acc{margin-left:25px}
.st-text{margin-left:3px;white-space:nowrap;width:170px}
.st-disp{margin-left:1044px}
.st-disp + .st-text{margin-left:2px;width:111px}
.st-v1{margin-left:47px}.st-v2{margin-left:41px}.st-v3{margin-left:41px}
.st-zoom{margin-left:28px}
.st-pct{margin-left:18px;color:#555}

/* watermark */
.mark{position:absolute;left:826px;top:862px;width:256px;display:flex;flex-direction:column;align-items:center;pointer-events:none;color:rgba(120,120,120,.62)}
.m-ar{font:700 66px/82px "DejaVu Sans",sans-serif;color:rgba(190,190,190,.42)}
.m-en{font:700 38px/38px "Liberation Sans",sans-serif;margin-top:-4px}
```
